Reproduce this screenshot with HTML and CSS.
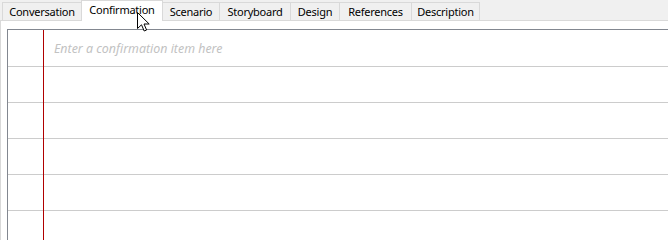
FILE: index.html
```html
<!DOCTYPE html>
<html lang="en">
<head>
  <meta charset="UTF-8">
  <title>Confirmation</title>
  <link rel="stylesheet" href="styles.css">
</head>
<body>
  <!-- barra de abas -->
  <div class="tabs">
    <div class="tab tab-conversation">Conversation</div>
    <div class="tab tab-confirmation active">Confirmation</div>
    <div class="tab tab-scenario">Scenario</div>
    <div class="tab tab-storyboard">Storyboard</div>
    <div class="tab tab-design">Design</div>
    <div class="tab tab-references">References</div>
    <div class="tab tab-description last">Description</div>
  </div>

  <div class="pane">
    <div class="sheet">
      <div class="row"><div class="gutter"></div><div class="item placeholder">Enter a confirmation item here</div></div>
      <div class="row"><div class="gutter"></div><div class="item"></div></div>
      <div class="row"><div class="gutter"></div><div class="item"></div></div>
      <div class="row"><div class="gutter"></div><div class="item"></div></div>
      <div class="row"><div class="gutter"></div><div class="item"></div></div>
      <div class="row"><div class="gutter"></div><div class="item"></div></div>
    </div>
  </div>

  <svg class="pointer" width="13" height="20" viewBox="0 0 13 20">
    <path d="M0.5 0.5 L0.5 16.5 L4.5 12.8 L7.2 19 L9.6 18 L7 12 L12.2 12 Z" fill="#fff" stroke="#000" stroke-width="1" stroke-linejoin="miter"/>
  </svg>
</body>
</html>
```

FILE: styles.css
```css
* {
  box-sizing: border-box;
  margin: 0;
  padding: 0;
}

body {
  width: 668px;
  height: 240px;
  overflow: hidden;
  background: #f0f0f0;
  font-family: 'Noto Sans', 'Open Sans', sans-serif;
  font-size: 12px;
  color: #000;
  display: flex;
  flex-direction: column;
  position: relative;
}

.tabs {
  display: flex;
  align-items: flex-end;
  height: 20px;
  padding-left: 2px;
}

.tab {
  height: 18px;
  border-top: 1px solid #d9d9d9;
  border-left: 1px solid #d9d9d9;
  background: #f0f0f0;
  display: flex;
  align-items: center;
  justify-content: center;
  padding-bottom: 1px;
  white-space: nowrap;
  font-size: 11px;
  letter-spacing: -0.25px;
}

.tab.last {
  border-right: 1px solid #d9d9d9;
}

.tab.active {
  height: 21px;
  margin-bottom: -1px;
  background: #fff;
  border-right: 1px solid #d9d9d9;
  padding-bottom: 3px;
  position: relative;
  z-index: 1;
}

.tab-conversation { width: 79px; }
.tab-confirmation { width: 82px; }
.tab-scenario { width: 56px; border-left: none; }
.tab-storyboard { width: 71px; }
.tab-design { width: 49px; }
.tab-references { width: 72px; }
.tab-description { width: 69px; }

.pane {
  flex: 1;
  background: #fff;
  border-top: 1px solid #d9d9d9;
  border-left: 1px solid #d9d9d9;
  padding: 8px 0 0 6px;
  display: flex;
}

.sheet {
  flex: 1;
  border-top: 1px solid #828790;
  border-left: 1px solid #828790;
  display: flex;
  flex-direction: column;
  position: relative;
}

/* linha vermelha da margem */
.sheet::before {
  content: "";
  position: absolute;
  top: 0;
  bottom: 0;
  left: 35px;
  width: 1px;
  background: #b00000;
}

.row {
  display: flex;
  height: 36px;
  flex-shrink: 0;
  border-bottom: 1px solid #cccccc;
}

.row:first-child {
  height: 37px;
}

.gutter {
  width: 36px;
}

.item {
  flex: 1;
  display: flex;
  align-items: center;
  padding-left: 10px;
}

.placeholder {
  font-style: italic;
  font-size: 12.4px;
  color: #c2c2c2;
  padding-top: 1px;
}

.pointer {
  position: absolute;
  left: 137px;
  top: 12px;
  z-index: 2;
}
```
